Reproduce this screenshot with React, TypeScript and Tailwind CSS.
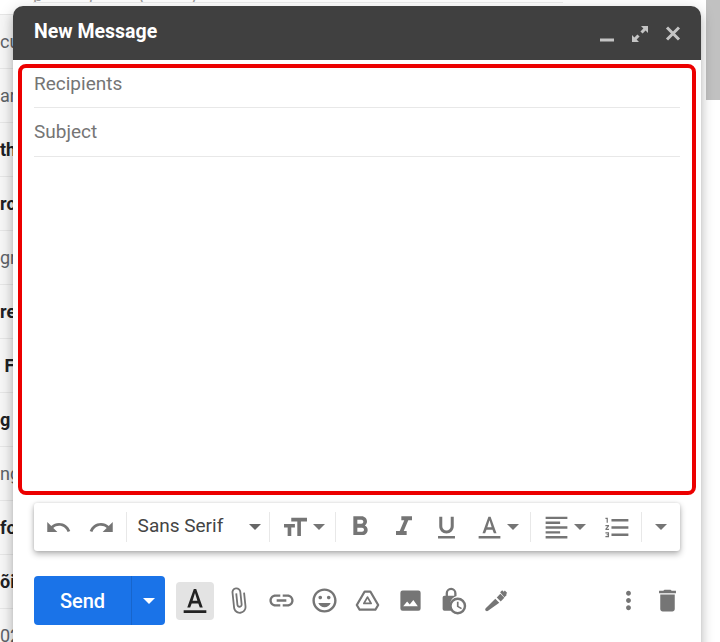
import type { ReactNode } from "react";

const rows = [
  { text: "cu", bold: false },
  { text: "ar", bold: false },
  { text: "th", bold: true },
  { text: "rc", bold: true },
  { text: "gn", bold: false },
  { text: "re", bold: true },
  { text: "\u00a0F", bold: true },
  { text: "g", bold: true },
  { text: "ng", bold: false },
  { text: "fo", bold: true },
  { text: "õi", bold: true },
  { text: "02", bold: false },
];

function Icon({ size = 29, className = "", children }: { size?: number; className?: string; children: ReactNode }) {
  return (
    <svg width={size} height={size} viewBox="0 0 24 24" fill="currentColor" className={className}>
      {children}
    </svg>
  );
}

function Caret({ className = "" }: { className?: string }) {
  return (
    <svg width="12" height="6" viewBox="0 0 12 6" fill="currentColor" className={className}>
      <path d="M0 0h12L6 6z" />
    </svg>
  );
}

function Divider() {
  return <div className="h-[30px] w-px shrink-0 bg-[#e8e8e8]" />;
}

function ToolbarButton({ width, children }: { width: string; children: ReactNode }) {
  return <div className={`flex h-full shrink-0 items-center justify-center ${width}`}>{children}</div>;
}

function FormatToolbar() {
  return (
    <div className="mx-[21px] mt-2 flex h-12 items-center rounded-[3px] bg-white pl-[3px] text-[#757575] shadow-[0_3px_6px_rgba(0,0,0,0.3),0_0_3px_rgba(0,0,0,0.12)]">
      <div className="flex h-full w-[43px] items-center justify-center">
        <Icon size={27}><path d="M12.5 8c-2.65 0-5.05.99-6.9 2.6L2 7v9h9l-3.62-3.62c1.39-1.16 3.16-1.88 5.12-1.88 3.54 0 6.55 2.31 7.6 5.5l2.37-.78C21.08 11.03 17.15 8 12.5 8z" /></Icon>
      </div>
      <div className="flex h-full w-[43px] items-center justify-center">
        <Icon size={27}><path d="M18.4 10.6C16.55 8.99 14.15 8 11.5 8c-4.65 0-8.58 3.03-9.96 7.22L3.9 16c1.05-3.19 4.05-5.5 7.6-5.5 1.95 0 3.73.72 5.12 1.88L13 16h9V7l-3.6 3.6z" /></Icon>
      </div>
      <div className="ml-[3px]"><Divider /></div>
      <div className="flex h-full w-[143px] items-center pl-[11px] pr-[7px] text-[#444]">
        <span className="flex-1 -translate-y-px text-[19px]">Sans Serif</span>
        <Caret className="-translate-x-px text-[#666]" />
      </div>
      <Divider />
      <ToolbarButton width="w-[65px]">
        <Icon className="-ml-1"><path d="M21.5 4v3h-5v12h-3V7h-5V4h13zM2.5 9h9v3h-3v7h-3v-7h-3V9z" /></Icon>
        <Caret className="-mr-1 ml-[3px]" />
      </ToolbarButton>
      <Divider />
      <ToolbarButton width="ml-[1px] w-[46px]">
        <Icon size={32}><path d="M15.6 10.79c.97-.67 1.65-1.77 1.65-2.79 0-2.26-1.75-4-4-4H7v14h7.04c2.09 0 3.71-1.7 3.71-3.79 0-1.52-.86-2.82-2.15-3.42zM10 6.5h3c.83 0 1.5.67 1.5 1.5s-.67 1.5-1.5 1.5h-3v-3zm3.5 9H10v-3h3.5c.83 0 1.5.67 1.5 1.5s-.67 1.5-1.5 1.5z" /></Icon>
      </ToolbarButton>
      <ToolbarButton width="w-[41px]">
        <Icon size={32}><path d="M10 4v3h2.21l-3.42 8H6v3h8v-3h-2.21l3.42-8H18V4z" /></Icon>
      </ToolbarButton>
      <ToolbarButton width="w-[45px]">
        <Icon><path d="M12 17c3.31 0 6-2.69 6-6V3h-2.5v8c0 1.93-1.57 3.5-3.5 3.5S8.5 12.93 8.5 11V3H6v8c0 3.31 2.69 6 6 6zm-7 2v2h14v-2H5z" /></Icon>
      </ToolbarButton>
      <ToolbarButton width="w-[61px]">
        <Icon className="-ml-[5px]"><path d="M3 19h18v2H3zm6.5-5.2h5l1.1 3h2.2L12.9 3h-1.8L6.2 16.8h2.2zM12 6l1.8 5.8h-3.6z" /></Icon>
        <Caret className="ml-[3px]" />
      </ToolbarButton>
      <Divider />
      <ToolbarButton width="w-[65px]">
        <Icon><path d="M3 3h18v2H3zM3 7h12v2H3zM3 11h18v2H3zM3 15h12v2H3zM3 19h18v2H3z" /></Icon>
        <Caret className="ml-[3px]" />
      </ToolbarButton>
      <ToolbarButton width="w-[43px]">
        <Icon><path d="M2 17h2v.5H3v1h1v.5H2v1h3v-4H2zm1-9h1V4H2v1h1v3zm-1 3h1.8L2 13.1v.9h3v-1H3.2L5 10.9V10H2v1zm5-6v2h14V5H7zm0 14h14v-2H7v2zm0-6h14v-2H7v2z" /></Icon>
      </ToolbarButton>
      <div className="ml-[2px]"><Divider /></div>
      <ToolbarButton width="w-[38px]">
        <Caret />
      </ToolbarButton>
    </div>
  );
}

function SendBar() {
  return (
    <div className="mt-[25px] flex items-center pl-[21px] pr-[14px] text-[#757575]">
      <div className="flex h-[49px] w-[131px] items-stretch overflow-hidden rounded-[4px] bg-[#1a73e8] text-white">
        <div className="flex w-[98px] items-center justify-center border-r border-[#1765cc] text-[20px] font-medium">Send</div>
        <div className="flex flex-1 items-center justify-center"><Caret /></div>
      </div>
      <div className="ml-[11px] flex h-[38px] w-[38px] items-center justify-center rounded-[4px] bg-[#e3e3e3] text-[#222]">
        <Icon size={32}><path d="M3.5 19h17v2h-17zm6-5.2h5l1.1 3h2.2L12.9 3h-1.8L6.2 16.8h2.2zM12 6l1.8 5.8h-3.6z" /></Icon>
      </div>
      <ToolbarButton width="ml-[3px] w-[43px]">
        <Icon className="-rotate-6"><path d="M16.5 6v11.5c0 2.21-1.79 4-4 4s-4-1.79-4-4V5c0-1.38 1.12-2.5 2.5-2.5s2.5 1.12 2.5 2.5v10.5c0 .55-.45 1-1 1s-1-.45-1-1V6H10v9.5c0 1.38 1.12 2.5 2.5 2.5s2.5-1.12 2.5-2.5V5c0-2.21-1.79-4-4-4S7 2.79 7 5v12.5c0 3.04 2.46 5.5 5.5 5.5s5.5-2.46 5.5-5.5V6h-1.5z" /></Icon>
      </ToolbarButton>
      <ToolbarButton width="w-[43px]">
        <Icon><path d="M3.9 12c0-1.71 1.39-3.1 3.1-3.1h4V7H7c-2.76 0-5 2.24-5 5s2.24 5 5 5h4v-1.9H7c-1.71 0-3.1-1.39-3.1-3.1zM8 13h8v-2H8v2zm9-6h-4v1.9h4c1.71 0 3.1 1.39 3.1 3.1s-1.39 3.1-3.1 3.1h-4V17h4c2.76 0 5-2.24 5-5s-2.24-5-5-5z" /></Icon>
      </ToolbarButton>
      <ToolbarButton width="w-[43px]">
        <Icon><path d="M11.99 2C6.47 2 2 6.48 2 12s4.47 10 9.99 10C17.52 22 22 17.52 22 12S17.52 2 11.99 2zM12 20c-4.42 0-8-3.58-8-8s3.58-8 8-8 8 3.58 8 8-3.58 8-8 8zm3.5-9c.83 0 1.5-.67 1.5-1.5S16.33 8 15.5 8 14 8.67 14 9.5s.67 1.5 1.5 1.5zm-7 0c.83 0 1.5-.67 1.5-1.5S9.33 8 8.5 8 7 8.67 7 9.5 7.67 11 8.5 11zm3.5 6.5c2.33 0 4.31-1.46 5.11-3.5H6.89c.8 2.04 2.78 3.5 5.11 3.5z" /></Icon>
      </ToolbarButton>
      <ToolbarButton width="w-[43px]">
        <Icon size={27}>
          <path fill="none" stroke="currentColor" strokeWidth="2" strokeLinejoin="round" d="M9.5 4h5l7 12-2.5 4.2H5L2.5 16z" />
          <path fill="none" stroke="currentColor" strokeWidth="1.6" strokeLinejoin="round" d="M12 9l3.2 5.6H8.8z" />
        </Icon>
      </ToolbarButton>
      <ToolbarButton width="w-[43px]">
        <Icon size={27}><path fillRule="evenodd" d="M3 5a2 2 0 0 1 2-2h14a2 2 0 0 1 2 2v14a2 2 0 0 1-2 2H5a2 2 0 0 1-2-2zM5.5 17h13l-4-5.5-3.2 4-2.3-2.7z" /></Icon>
      </ToolbarButton>
      <ToolbarButton width="w-[43px]">
        <Icon>
          <path d="M10 1.5A4.5 4.5 0 0 0 5.5 6v2H4.5A1.5 1.5 0 0 0 3 9.500V19a1.500 1.500 0 0 0 1.500 1.500h6.700A7.500 7.500 0 0 1 14.500 8.200V6A4.500 4.500 0 0 0 10 1.500zm2.600 6.500H7.400V6a2.600 2.600 0 0 1 5.200 0z" />
          <path fillRule="evenodd" d="M15.500 9.500a7 7 0 1 0 0 14 7 7 0 0 0 0-14zm0 2a5 5 0 1 1 0 10 5 5 0 0 1 0-10z" />
          <path d="M14.800 13h1.400v3.500l2.800 1.700-.7 1.100-3.500-2.100z" />
        </Icon>
      </ToolbarButton>
      <ToolbarButton width="w-[43px]">
        <Icon>
          <path d="M5 20.500c-.8.8-2 .2-2.300-.6-.2-.6 0-1.100.4-1.500L11 10.500l3.300 3.300z" />
          <path d="M12.200 9.500l3-3 3.300 3.300-3 3z" />
          <path d="M15 5.200l1.700-1.700 1.200 1.200 1-1 2 2-1 1 .6.700-2 2z" />
        </Icon>
      </ToolbarButton>
      <div className="flex-1" />
      <ToolbarButton width="w-[39px]">
        <Icon><path d="M12 8c1.100 0 2-.9 2-2s-.9-2-2-2-2 .9-2 2 .9 2 2 2zm0 2c-1.100 0-2 .9-2 2s.9 2 2 2 2-.9 2-2-.9-2-2-2zm0 6c-1.100 0-2 .9-2 2s.9 2 2 2 2-.9 2-2-.9-2-2-2z" /></Icon>
      </ToolbarButton>
      <ToolbarButton width="w-[39px]">
        <Icon><path d="M6 19c0 1.100.9 2 2 2h8c1.100 0 2-.9 2-2V7H6v12zM19 4h-3.500l-1-1h-5l-1 1H5v2h14V4z" /></Icon>
      </ToolbarButton>
    </div>
  );
}

export default function App() {
  return (
    <div className="relative flex h-[642px] w-[720px] justify-between overflow-hidden bg-white font-['Roboto',sans-serif]">
      {/* mail list behind the compose window */}
      <div className="w-[13px] pt-[14px] text-[#202124]">
        {rows.map((row) => (
          <div
            key={row.text}
            className="flex h-[54px] items-center overflow-hidden whitespace-nowrap border-t border-[#e6e6e6] bg-[#f6f6f6] text-[18px]"
          >
            <span className={row.bold ? "font-bold" : "text-[#5f6368]"}>{row.text}</span>
          </div>
        ))}
      </div>
      <div className="h-[100px] w-[14px] bg-[#c1c1c1]" />

      {/* descenders of the row cut off above the window */}
      <div className="absolute left-[33px] top-0 flex h-[3px] w-[530px] gap-[46px] overflow-hidden border-b border-[#ececec] text-[18px] leading-none text-[#a0a0a0]">
        <span className="-mt-[14px]">p</span>
        <span className="-mt-[14px]">,</span>
        <span className="-mt-[14px]">(</span>
        <span className="-mt-[14px]">)</span>
      </div>

      <div className="absolute left-[13px] top-[6px] h-[660px] w-[688px] rounded-t-[10px] bg-white shadow-[0_8px_10px_1px_rgba(0,0,0,0.14),0_3px_14px_2px_rgba(0,0,0,0.12),0_5px_5px_-3px_rgba(0,0,0,0.2)]">
        <div className="flex h-[54px] items-center justify-between rounded-t-[10px] bg-[#404040] pl-[21px] pr-[19px] text-[#c4c4c4]">
          <span className="-translate-y-px text-[19.5px] font-bold text-white">New Message</span>
          <div className="flex translate-y-px items-center gap-[15px]">
            <svg width="18" height="18" viewBox="0 0 18 18" fill="currentColor"><path d="M2 13.500h14V16.500H2z" /></svg>
            <svg width="18" height="18" viewBox="0 0 18 18" fill="currentColor"><path d="M10 1h7v7l-2.400-2.400-3 3-2.200-2.200 3-3zM1 17v-7l2.400 2.400 3-3 2.200 2.200-3 3L8 17z" /></svg>
            <svg width="18" height="18" viewBox="0 0 18 18" fill="none" stroke="currentColor" strokeWidth="3"><path d="M3 2.500l12 12M15 2.500l-12 12" /></svg>
          </div>
        </div>

        <div className="mx-[5px] mt-1 flex h-[431px] flex-col rounded-[8px] border-4 border-[#ec0000] px-3 text-[19px] text-[#757575]">
          <div className="flex h-[40px] shrink-0 items-start border-b border-[#e8e8e8] pt-[2px]"><span>Recipients</span></div>
          <div className="flex h-[49px] shrink-0 items-center border-b border-[#e8e8e8]"><span>Subject</span></div>
        </div>

        <FormatToolbar />
        <SendBar />
      </div>
    </div>
  );
}
